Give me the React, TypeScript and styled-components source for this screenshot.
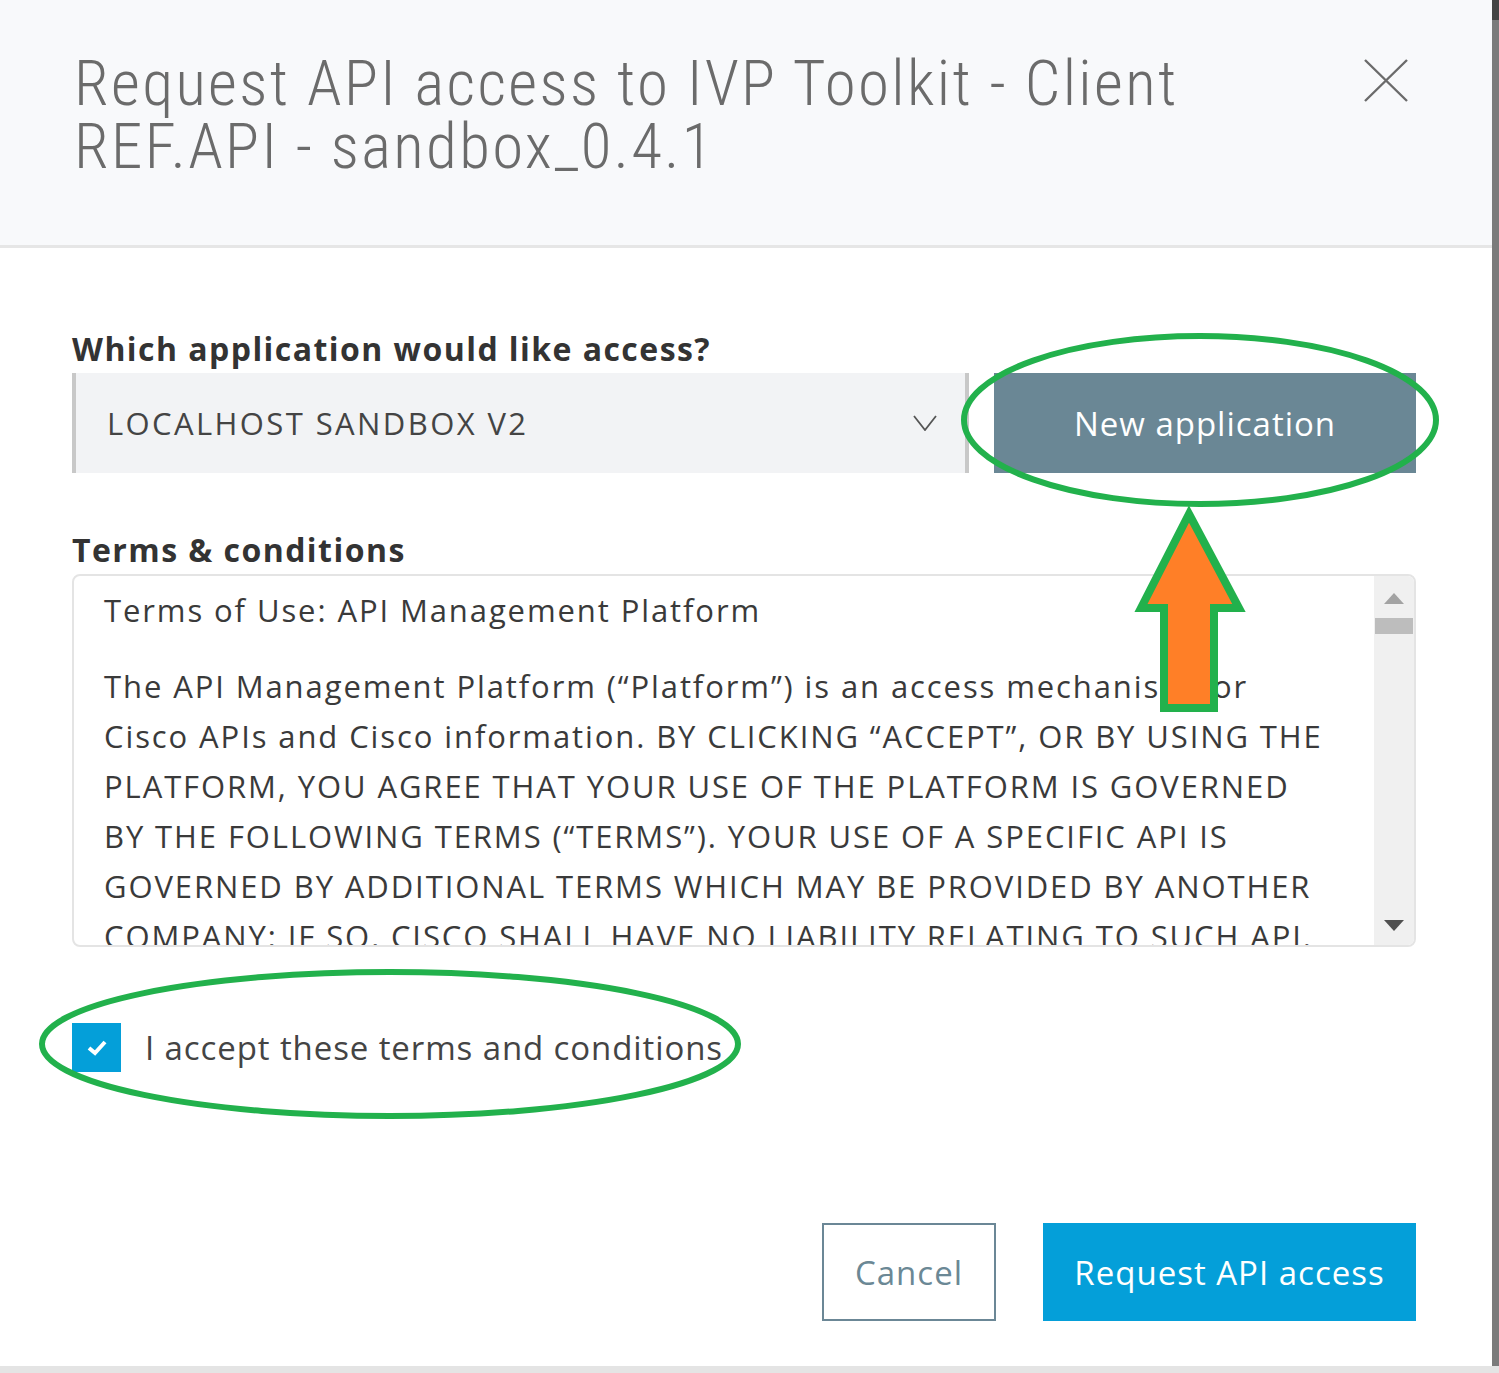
import React from 'react';
import styled, { createGlobalStyle } from 'styled-components';

const Global = createGlobalStyle`
  html, body { margin: 0; padding: 0; background: #fff; }
  body { font-family: "Open Sans", "Liberation Sans", sans-serif; }
  #root { width: 1499px; }
`;

const Page = styled.div`
  position: relative;
  width: 1499px;
  height: 1373px;
  overflow: hidden;
  display: flex;
  flex-direction: column;
  background: #fff;
`;

const Main = styled.div`
  flex: 1;
  display: flex;
  min-height: 0;
`;

const Modal = styled.div`
  flex: 1;
  display: flex;
  flex-direction: column;
  background: #fff;
`;

const EdgeStrip = styled.div`
  width: 7px;
  background: linear-gradient(#444 0 20px, #7b7b7b 20px);
`;

const BottomBand = styled.div`
  height: 7px;
  background: #e4e4e4;
`;

const Header = styled.header`
  box-sizing: border-box;
  height: 248px;
  background: #f8f9fb;
  border-bottom: 3px solid #e6e6e6;
  padding: 52px 84px 0 74px;
  display: flex;
  justify-content: space-between;
  align-items: flex-start;
`;

const Title = styled.h1`
  margin: 0;
  font-family: "Roboto Condensed", Roboto, "Liberation Sans", sans-serif;
  font-weight: 300;
  font-size: 63px;
  line-height: 63px;
  letter-spacing: 2.35px;
  color: #6b6b6b;
  max-width: 1200px;
`;

const CloseButton = styled.button`
  margin-top: 6px;
  width: 44px;
  height: 44px;
  padding: 0;
  border: 0;
  background: transparent;
  display: flex;
  cursor: pointer;
`;

const Body = styled.div`
  padding: 0 76px 0 72px;
  display: flex;
  flex-direction: column;
`;

const FieldLabel = styled.div<{ $top: number }>`
  margin-top: ${p => p.$top}px;
  margin-bottom: 4px;
  font-weight: 700;
  font-size: 32px;
  line-height: 40px;
  letter-spacing: 1.45px;
  color: #333;
`;

const SelectRow = styled.div`
  display: flex;
  gap: 25px;
  height: 100px;
`;

const Select = styled.div`
  flex: 1;
  display: flex;
  align-items: center;
  justify-content: space-between;
  background: #f2f3f5;
  border-left: 4px solid #c8c8c8;
  border-right: 4px solid #c8c8c8;
  padding: 0 28px 0 31px;
  font-size: 31px;
  letter-spacing: 2.4px;
  color: #444;
`;

const Button = styled.button<{ $variant: 'slate' | 'primary' | 'ghost'; $w: number }>`
  box-sizing: border-box;
  width: ${p => p.$w}px;
  height: 100%;
  font-family: "Open Sans", "Liberation Sans", sans-serif;
  font-size: 33px;
  letter-spacing: 1px;
  padding: 0;
  cursor: pointer;
  border: ${p => (p.$variant === 'ghost' ? '2px solid #6b8796' : '0')};
  color: ${p => (p.$variant === 'ghost' ? '#6b8895' : '#fff')};
  background: ${p =>
    p.$variant === 'slate' ? '#6a8795' : p.$variant === 'primary' ? '#049fd9' : '#fff'};
`;

const TermsBox = styled.div`
  box-sizing: border-box;
  height: 373px;
  border: 2px solid #e4e4e4;
  border-radius: 8px;
  display: flex;
  overflow: hidden;
`;

const TermsContent = styled.div`
  flex: 1;
  overflow: hidden;
  padding: 9px 0 0 30px;
  font-size: 31px;
  line-height: 50px;
  letter-spacing: 1.9px;
  color: #3a3a3a;
`;

const TermsHeading = styled.div`
  margin-bottom: 26px;
`;

const TermsLine = styled.div`
  white-space: nowrap;
`;

const ScrollTrack = styled.div`
  width: 40px;
  background: #f0f0f0;
  display: flex;
  flex-direction: column;
  align-items: center;
  padding-top: 17px;
`;

const ScrollThumb = styled.div`
  width: 38px;
  height: 16px;
  background: #bdbdbd;
  margin-top: 14px;
`;

const ScrollDown = styled.div`
  margin-top: auto;
  margin-bottom: 14px;
  display: flex;
`;

const CheckRow = styled.label`
  margin-top: 76px;
  display: flex;
  align-items: center;
  gap: 24px;
  font-size: 33px;
  letter-spacing: 0.9px;
  color: #444;
`;

const CheckBox = styled.span`
  width: 49px;
  height: 49px;
  background: #049fd9;
  display: flex;
  align-items: center;
  justify-content: center;
`;

const Actions = styled.div`
  margin-top: 151px;
  height: 98px;
  display: flex;
  justify-content: flex-end;
  gap: 47px;
`;

const Overlay = styled.svg`
  position: absolute;
  left: 0;
  top: 0;
  pointer-events: none;
`;

const lines = [
  'The API Management Platform (\u201cPlatform\u201d) is an access mechanism for',
  'Cisco APIs and Cisco information. BY CLICKING \u201cACCEPT\u201d, OR BY USING THE',
  'PLATFORM, YOU AGREE THAT YOUR USE OF THE PLATFORM IS GOVERNED',
  'BY THE FOLLOWING TERMS (\u201cTERMS\u201d). YOUR USE OF A SPECIFIC API IS',
  'GOVERNED BY ADDITIONAL TERMS WHICH MAY BE PROVIDED BY ANOTHER',
  'COMPANY; IF SO, CISCO SHALL HAVE NO LIABILITY RELATING TO SUCH API.',
  'Cisco may modify these Terms at any time.',
];

export default function App() {
  return (
    <>
      <Global />
      <Page>
        <Main>
          <Modal>
            <Header>
              <Title>Request API access to IVP Toolkit - Client REF.API - sandbox_0.4.1</Title>
              <CloseButton aria-label="Close">
                <svg width="44" height="44" viewBox="0 0 44 44">
                  <path d="M1 2 L43 43 M43 2 L1 43" stroke="#6b6b6b" strokeWidth="2.4" fill="none" />
                </svg>
              </CloseButton>
            </Header>
            <Body>
              <FieldLabel $top={81}>Which application would like access?</FieldLabel>
              <SelectRow>
                <Select>
                  <span>LOCALHOST SANDBOX V2</span>
                  <svg width="24" height="16" viewBox="0 0 24 16">
                    <path d="M1 1 L12 15 L23 1" stroke="#555" strokeWidth="1.8" fill="none" />
                  </svg>
                </Select>
                <Button $variant="slate" $w={422}>New application</Button>
              </SelectRow>
              <FieldLabel $top={57}>Terms &amp; conditions</FieldLabel>
              <TermsBox>
                <TermsContent>
                  <TermsHeading>Terms of Use: API Management Platform</TermsHeading>
                  {lines.map(l => (
                    <TermsLine key={l}>{l}</TermsLine>
                  ))}
                </TermsContent>
                <ScrollTrack>
                  <svg width="20" height="11" viewBox="0 0 20 11">
                    <path d="M10 0 L20 11 L0 11 Z" fill="#a3a3a3" />
                  </svg>
                  <ScrollThumb />
                  <ScrollDown>
                    <svg width="20" height="11" viewBox="0 0 20 11">
                      <path d="M0 0 L20 0 L10 11 Z" fill="#505050" />
                    </svg>
                  </ScrollDown>
                </ScrollTrack>
              </TermsBox>
              <CheckRow>
                <CheckBox>
                  <svg width="22" height="18" viewBox="0 0 22 18">
                    <path d="M3 9 L9 14 L19 3" stroke="#fff" strokeWidth="4" fill="none" />
                  </svg>
                </CheckBox>
                I accept these terms and conditions
              </CheckRow>
              <Actions>
                <Button $variant="ghost" $w={174}>Cancel</Button>
                <Button $variant="primary" $w={373}>Request API access</Button>
              </Actions>
            </Body>
          </Modal>
          <EdgeStrip />
        </Main>
        <BottomBand />
        <Overlay width="1499" height="1373" viewBox="0 0 1499 1373">
          <ellipse cx="1200" cy="420" rx="236" ry="84" fill="none" stroke="#22b14c" strokeWidth="6" />
          <ellipse cx="390" cy="1044" rx="348" ry="72" fill="none" stroke="#22b14c" strokeWidth="6" />
          <polygon
            points="1189,514 1239,608 1214,608 1214,708 1164,708 1164,608 1141,608"
            fill="#ff7f27"
            stroke="#22b14c"
            strokeWidth="8"
            strokeLinejoin="miter"
          />
        </Overlay>
      </Page>
    </>
  );
}
